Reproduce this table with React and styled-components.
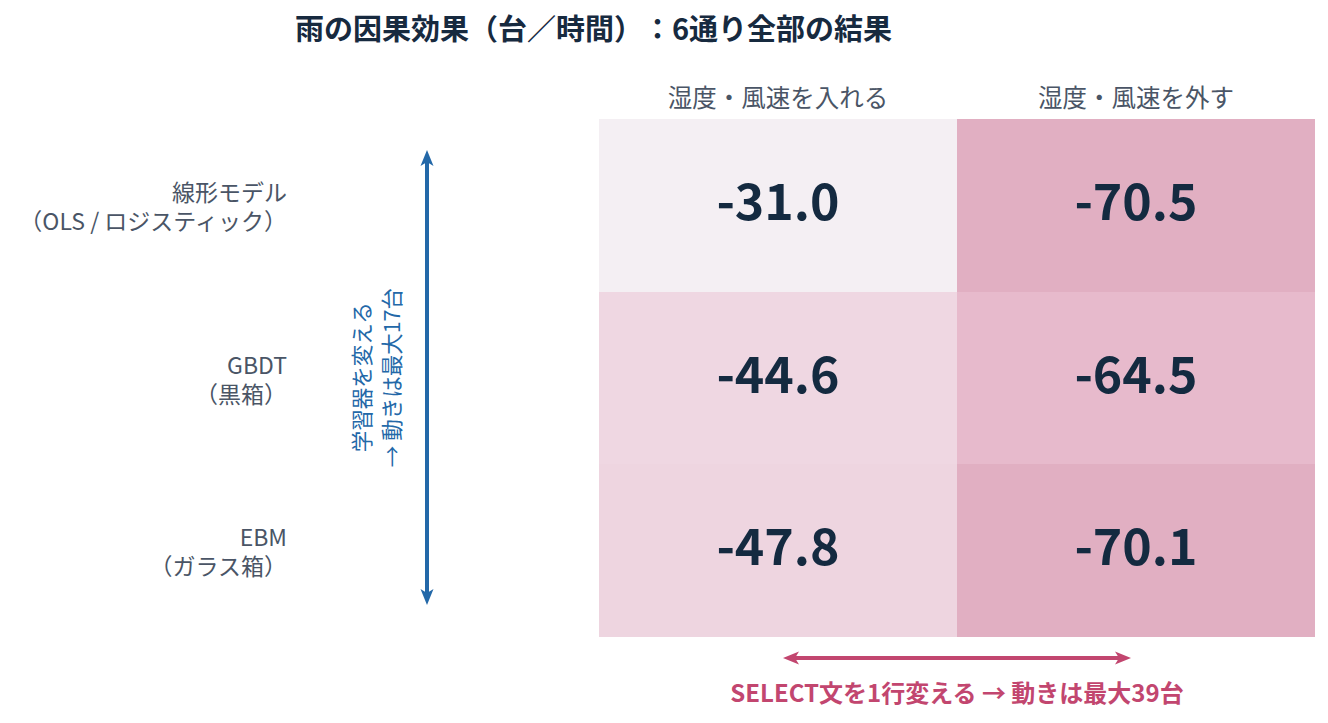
import React from "react";
import styled, { createGlobalStyle } from "styled-components";

const GlobalStyle = createGlobalStyle`
  html, body {
    margin: 0;
    padding: 0;
    background: #ffffff;
  }
  body {
    font-family: "Noto Sans CJK JP", "Noto Sans", sans-serif;
    text-spacing-trim: space-all;
  }
`;

const Page = styled.div`
  width: 1328px;
  height: 723px;
  overflow: hidden;
`;

const Title = styled.h1`
  margin: 0;
  padding: 9px 0 10px 295px;
  height: 36px;
  font-size: 29px;
  line-height: 36px;
  font-weight: 700;
  color: #172a3f;
`;

const Chart = styled.div`
  display: grid;
  grid-template-columns: 290px 309px 358px 358px;
  grid-template-rows: 64px repeat(3, 172.5px) auto;
`;

const ColHeader = styled.div`
  grid-row: 1;
  grid-column: ${p => p.col};
  align-self: end;
  padding-bottom: 5px;
  text-align: center;
  font-size: 24.5px;
  line-height: 34px;
  color: #4a5566;
`;

const RowLabel = styled.div`
  grid-column: 1;
  grid-row: ${p => p.row};
  align-self: center;
  padding: 2px 3px 0 0;
  text-align: right;
  font-size: 23px;
  color: #4a5566;
`;

const LabelLine = styled.span`
  display: block;
  line-height: 29px;
`;

const Axis = styled.div`
  grid-column: 2;
  grid-row: 2 / span 3;
  display: flex;
  align-items: center;
  padding-left: 56px;
  gap: 13px;
`;

const VerticalNote = styled.div`
  writing-mode: vertical-rl;
  text-orientation: sideways;
  transform: rotate(180deg);
  text-align: center;
  font-size: 21.5px;
  line-height: 30px;
  color: #2368a8;
  white-space: nowrap;
`;

const Cell = styled.div`
  grid-column: ${p => p.col};
  grid-row: ${p => p.row};
  background: ${p => p.bg};
  display: flex;
  align-items: center;
  justify-content: center;
  padding-bottom: 14px;
  font-size: 50px;
  font-weight: 700;
  color: #142a40;
`;

const Footer = styled.div`
  grid-column: 3 / span 2;
  grid-row: 5;
  display: flex;
  flex-direction: column;
  align-items: center;
  padding-top: 14px;
  gap: 11px;
`;

const FooterNote = styled.div`
  font-size: 24px;
  line-height: 32px;
  font-weight: 700;
  color: #c2466f;
`;

const VArrow = ({ height, color }) => (
  <svg width="16" height={height} viewBox={`0 0 16 ${height}`}>
    <line x1="8" y1="8" x2="8" y2={height - 8} stroke={color} strokeWidth="4" />
    <path d="M8 0 L14.5 16 L8 12 L1.5 16 Z" fill={color} />
    <path d={`M8 ${height} L14.5 ${height - 16} L8 ${height - 12} L1.5 ${height - 16} Z`} fill={color} />
  </svg>
);

const HArrow = ({ width, color }) => (
  <svg width={width} height="14" viewBox={`0 0 ${width} 14`}>
    <line x1="8" y1="7" x2={width - 8} y2="7" stroke={color} strokeWidth="4" />
    <path d="M0 7 L16 0.5 L12 7 L16 13.5 Z" fill={color} />
    <path d={`M${width} 7 L${width - 16} 0.5 L${width - 12} 7 L${width - 16} 13.5 Z`} fill={color} />
  </svg>
);

const rows = [
  { label: ["線形モデル", "（OLS / ロジスティック）"], values: [["-31.0", "#f4eff3"], ["-70.5", "#e1afc2"]] },
  { label: ["GBDT", "（黒箱）"], values: [["-44.6", "#efd7e2"], ["-64.5", "#e7bacc"]] },
  { label: ["EBM", "（ガラス箱）"], values: [["-47.8", "#eed5e0"], ["-70.1", "#e1afc2"]] },
];

const App = () => (
  <Page>
    <GlobalStyle />
    <Title>雨の因果効果（台／時間）：6通り全部の結果</Title>
    <Chart>
      <ColHeader col={3}>湿度・風速を入れる</ColHeader>
      <ColHeader col={4}>湿度・風速を外す</ColHeader>
      {rows.map((r, i) => (
        <React.Fragment key={i}>
          <RowLabel row={i + 2}>
            <LabelLine>{r.label[0]}</LabelLine>
            <LabelLine>{r.label[1]}</LabelLine>
          </RowLabel>
          {r.values.map(([v, bg], j) => (
            <Cell key={j} row={i + 2} col={j + 3} bg={bg}>
              {v}
            </Cell>
          ))}
        </React.Fragment>
      ))}
      <Axis>
        <VerticalNote>
          学習器を変える
          <br />→ 動きは最大17台
        </VerticalNote>
        <VArrow height={455} color="#2368a8" />
      </Axis>
      <Footer>
        <HArrow width={348} color="#c2466f" />
        <FooterNote>SELECT文を1行変える → 動きは最大39台</FooterNote>
      </Footer>
    </Chart>
  </Page>
);

export default App;
